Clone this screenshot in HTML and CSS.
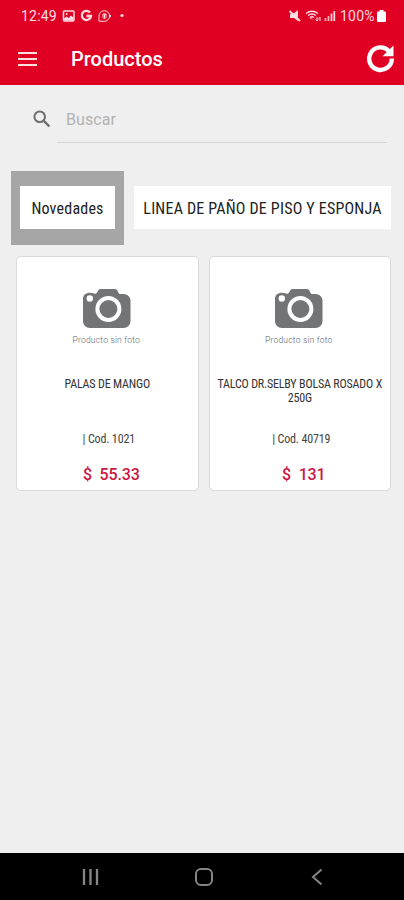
FILE: index.html
```html
<!DOCTYPE html>
<html lang="es">
<head>
    <meta charset="utf-8">
    <meta name="viewport" content="width=device-width, initial-scale=1">
    <title>Productos</title>
    <link rel="stylesheet" href="styles.css">
</head>
<body>
<svg class="sprite" aria-hidden="true">
    <symbol id="camera" viewBox="0 0 48 39">
        <path fill="#727476" d="M6.500 3.800c3 0 4 1 6 1 2 0 2-4.800 5-4.800h14.500c3 0 3 5 5 5h3.500c4 0 7 3 7 6.500V32c0 4-3 7-7 7H7c-4 0-7-3-7-7V10c0-4 3-6.200 6.500-6.200z"/>
        <circle cx="25.400" cy="20" r="11" fill="#727476" stroke="#fff" stroke-width="4"/>
        <circle cx="6.800" cy="9.500" r="3.200" fill="#fff"/>
    </symbol>
</svg>
<div class="app">
    <header class="header">
        <div class="status">
            <span class="status_time">12:49</span>
            <svg class="status_left" width="66" height="14" viewBox="0 0 66 14" fill="none" stroke="#ffdce1">
                <rect x="1.500" y="2" width="10.500" height="10" rx="1" stroke-width="1.500"/>
                <path d="M2 11.500V9.500l2.500-2 2 1.500L9 6.500l2.500 2v3z" fill="#ffdce1" stroke="none"/>
                <circle cx="4.700" cy="5" r="1" fill="#ffdce1" stroke="none"/>
                <path d="M28 3.500A4.600 4.600 0 1 0 29 7h-4.500" stroke-width="2.300"/>
                <path d="M37 12.200V7a5.300 5.300 0 1 1 5.300 5.300zM47 5l2 2-2 2" stroke-width="1"/>
                <path d="M41 5h3v3.500l-1.500 1.500L41 8.500zM42.500 5v4" stroke-width="1"/>
                <circle cx="60" cy="6.500" r="1.600" fill="#ffdce1" stroke="none"/>
            </svg>
            <svg class="status_right" width="50" height="14" viewBox="0 0 50 14" fill="none" stroke="#ffdce1">
                <path d="M2 5h3l5-4v11L6 9H2z" fill="#ffdce1" stroke="none"/>
                <path d="M1.500 2l10.500 10" stroke-width="1.800"/>
                <path d="M18 4.500q6-4.500 12 0M20 6.500q4-3 8 0M22 8.500q2-1.500 4 0" stroke-width="1.500"/>
                <path d="M24 10.500l-2-2M29 8v4M27.500 10.500L29 12l1.500-1.500M32 12V8M30.500 9.500L32 8" stroke-width="1"/>
                <path d="M37.500 12V9M40.500 12V7" stroke-width="1.800" opacity=".8"/>
                <path d="M43.500 12V4.500M46.300 12V2" stroke-width="1.700"/>
            </svg>
            <span class="status_charge">100%</span>
            <svg width="9" height="12" viewBox="0 0 9 12" fill="#fff"><path d="M2.500 0h4v1.500H8q1 0 1 1V11q0 1-1 1H1q-1 0-1-1V2.500q0-1 1-1h1.500z"/></svg>
        </div>
        <div class="toolbar">
            <svg class="toolbar_menu" width="20" height="14" viewBox="0 0 20 14" stroke="#ffdce1" stroke-width="1.800"><path d="M0 1h19M0 7h19M0 13h19"/></svg>
            <h1 class="toolbar_title">Productos</h1>
            <svg class="toolbar_refresh" width="28" height="28" viewBox="0 0 28 28">
                <path d="M21.800 6A11.300 11.300 0 1 0 24.800 13.500" fill="none" stroke="#fff" stroke-width="4.400"/>
                <path d="M26.500 .5v10.800H15.500z" fill="#fff"/>
            </svg>
        </div>
    </header>
    <main class="content">
        <div class="search">
            <svg class="search_icon" width="18" height="18" viewBox="0 0 18 18" fill="none" stroke="#6e6e6e">
                <circle cx="6.700" cy="6.700" r="5.300" stroke-width="2"/>
                <path d="M10.800 10.800l5.600 5.700" stroke-width="2.400"/>
            </svg>
            <input class="search_input" type="text" placeholder="Buscar">
        </div>
        <nav class="categories">
            <div class="category category_active"><span class="category_name">Novedades</span></div>
            <div class="category category_wide"><span class="category_name">LINEA DE PAÑO DE PISO Y ESPONJA</span></div>
        </nav>
        <section class="products">
            <article class="card">
                <svg class="card_camera"><use href="#camera"/></svg>
                <span class="card_empty">Producto sin foto</span>
                <h2 class="card_name">PALAS DE MANGO</h2>
                <span class="card_code">| Cod. 1021</span>
                <span class="card_price">$&nbsp; 55.33</span>
            </article>
            <article class="card">
                <svg class="card_camera"><use href="#camera"/></svg>
                <span class="card_empty">Producto sin foto</span>
                <h2 class="card_name">TALCO DR.SELBY BOLSA ROSADO X<br>250G</h2>
                <span class="card_code">| Cod. 40719</span>
                <span class="card_price">$&nbsp; 131</span>
            </article>
        </section>
    </main>
    <footer class="navbar">
        <svg width="18" height="18" viewBox="0 0 18 18" stroke="#858585" stroke-width="2.300"><path d="M2 1v16M8.500 1v16M15 1v16"/></svg>
        <svg class="navbar_home" width="20" height="20" viewBox="0 0 20 20" fill="none" stroke="#858585" stroke-width="2"><rect x="2" y="2" width="16" height="16" rx="5"/></svg>
        <svg width="12" height="18" viewBox="0 0 12 18" fill="none" stroke="#858585" stroke-width="2"><path d="M10.500 1.500L2 9l8.500 7.500"/></svg>
    </footer>
</div>
</body>
</html>
```
FILE: styles.css
```css
* {
    box-sizing: border-box;
}

body {
    margin: 0;
    font-family: Roboto, sans-serif;
    background: #efefef;
}

.sprite {
    display: none;
}

.app {
    display: flex;
    flex-direction: column;
    height: 900px;
    overflow: hidden;
}

.header {
    height: 85px;
    background: #df0024;
    color: #fff;
    flex-shrink: 0;
}

.status {
    display: flex;
    align-items: center;
    height: 32px;
    padding: 0 18px 0 21px;
    font-size: 14px;
    color: #ffdce1;
}

.status_time {
    width: 41px;
    letter-spacing: 0.2px;
}

.status_right {
    margin-left: auto;
}

.status_charge {
    width: 36px;
    margin: 0 1px 0 2px;
    letter-spacing: 0.2px;
}

.toolbar {
    display: flex;
    align-items: center;
    height: 53px;
    padding: 0 9px 0 18px;
}

.toolbar_title {
    margin: 0 auto 0 33px;
    font-size: 20px;
    font-weight: 500;
}

.content {
    flex-grow: 1;
}

.search {
    display: flex;
    align-items: center;
    gap: 6px;
    padding: 9px 17px 0 33px;
}

.search_input {
    flex-grow: 1;
    min-width: 1px;
    height: 49px;
    padding: 2px 9px 0;
    border: none;
    border-bottom: 1px solid #d6d6d6;
    outline: none;
    background: none;
    font: 16px Roboto, sans-serif;
    letter-spacing: 0.1px;
}

.search_input::placeholder {
    color: #b2b2b2;
}

.categories {
    display: flex;
    gap: 10px;
    padding: 28px 0 0 11px;
}

.category {
    display: flex;
    align-items: center;
    justify-content: center;
    flex-shrink: 0;
    width: 113px;
    height: 74px;
    border: solid #a6a6a6;
    border-width: 15px 9px 16px;
    padding-top: 1px;
    background: #fff;
    font-size: 16px;
    letter-spacing: 0.2px;
    color: #222;
}

.category_wide {
    width: 257px;
    border-width: 15px 0 16px;
    border-color: #efefef;
}

/* narrow lettering */
.category_name,
.card_name,
.card_code {
    white-space: nowrap;
    font-stretch: 75%;
}

.products {
    display: flex;
    gap: 10px;
    padding: 11px 13px 0 16px;
}

.card {
    display: flex;
    flex: 1 1 0;
    min-width: 0;
    flex-direction: column;
    align-items: center;
    height: 235px;
    padding-right: 2px;
    border: 1px solid #d9d9d9;
    border-radius: 5px;
    background: #fff;
}

.card_camera {
    width: 48px;
    height: 39px;
    margin: 32px 0 0 1px;
    flex-shrink: 0;
}

.card_empty {
    margin-top: 7px;
    font-size: 8.500px;
    font-weight: 300;
    line-height: 11px;
    letter-spacing: 0.2px;
    color: #666;
}

.card_name {
    height: 28px;
    margin: 31px 0 0 2px;
    font-size: 12px;
    font-weight: 400;
    line-height: 14px;
    letter-spacing: -0.180px;
    text-align: center;
    color: #333;
}

.card_code {
    margin: 27px 0 0 5px;
    font-size: 12px;
    line-height: 14px;
    letter-spacing: -0.150px;
    color: #444;
}

.card_price {
    margin: 19px 0 0 10px;
    font-size: 16px;
    font-weight: 500;
    line-height: 20px;
    letter-spacing: -0.150px;
    color: #cb1643;
}

.navbar {
    display: flex;
    align-items: center;
    justify-content: space-between;
    height: 47px;
    padding: 0 81px 0 82px;
    background: #000;
}

.navbar_home {
    margin-right: 3px;
}
```
